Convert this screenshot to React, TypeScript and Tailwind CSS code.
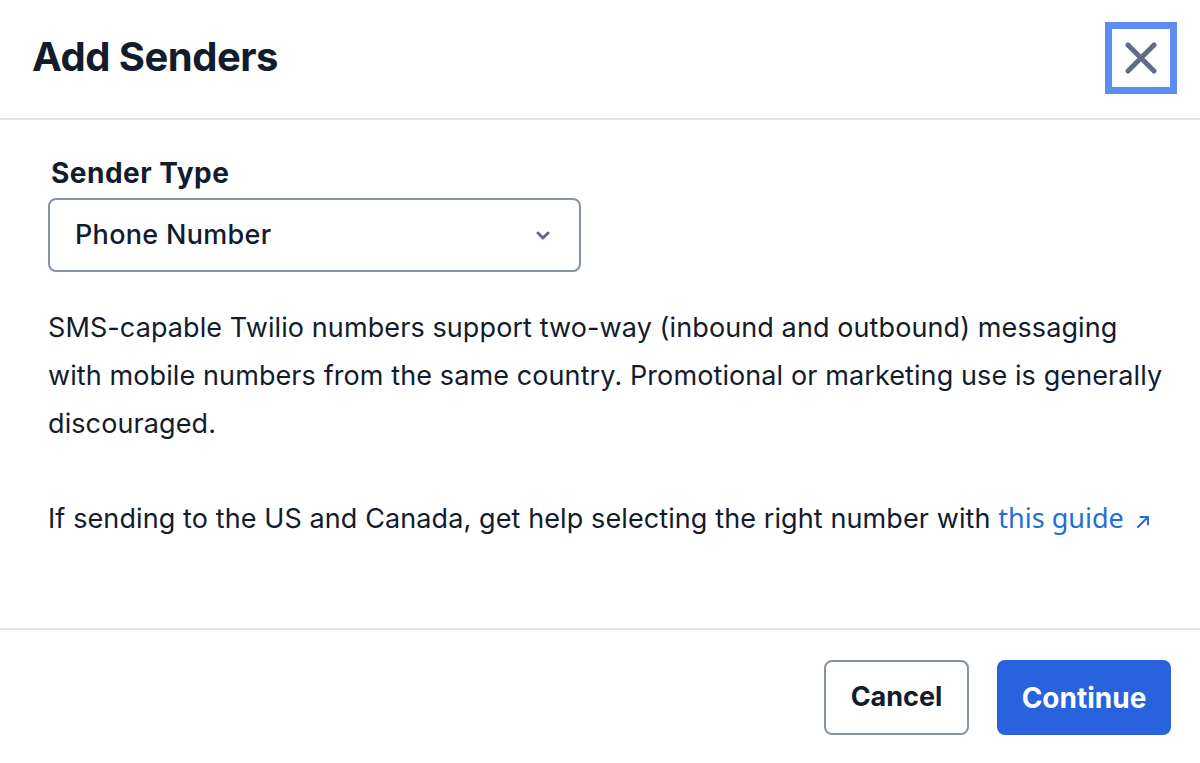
import { useState } from "react";

const inter = "font-['Inter','Liberation_Sans',sans-serif]";

// close "x" drawn with two rounded strokes
function CloseIcon() {
  return (
    <svg width="32" height="32" viewBox="0 0 32 32" fill="none">
      <path d="M3 3 L29 29 M29 3 L3 29" stroke="#606b85" strokeWidth="5" strokeLinecap="round" />
    </svg>
  );
}

function ChevronDown() {
  return (
    <svg width="14" height="9" viewBox="0 0 14 9" fill="none">
      <path d="M2 2 L7 7 L12 2" stroke="#606b85" strokeWidth="3" strokeLinecap="round" strokeLinejoin="round" />
    </svg>
  );
}

function ExternalArrow() {
  return (
    <svg width="14" height="14" viewBox="0 0 14 14" fill="none" className="inline-block ml-[12px] align-[-1px]">
      <path d="M2 12 L12 2 M4.5 2 H12 V9.5" stroke="#1f6fd9" strokeWidth="2" strokeLinecap="round" strokeLinejoin="round" />
    </svg>
  );
}

export default function App() {
  const [senderType, setSenderType] = useState("Phone Number");

  return (
    <div className={`${inter} w-[1200px] h-[763px] bg-white text-[#121c2d] flex flex-col`}>
      {/* Header */}
      <div className="h-[120px] flex items-center justify-between pl-[32px] pr-[23px] border-b-2 border-[#e1e3ea]">
        <h1 className="text-[40px] leading-[48px] font-bold tracking-[-0.5px] mt-[-4px]">Add Senders</h1>
        <button className="w-[72px] h-[72px] mt-[-2px] border-[7px] border-[#5b8ef0] flex items-center justify-center">
          <CloseIcon />
        </button>
      </div>

      {/* Body */}
      <div className="flex-1 pl-[48px] pr-[16px] pt-[35px]">
        <label className="block pl-[3px] text-[28px] leading-[36px] font-bold tracking-[0.5px]">Sender Type</label>
        <div className="mt-[7px] w-[533px] h-[74px] border-2 border-[#8891aa] rounded-[8px] flex items-center justify-between pl-[25px] pr-[29px]">
          <span className="text-[27px] font-medium tracking-[0.3px]" onClick={() => setSenderType(senderType)}>
            {senderType}
          </span>
          <ChevronDown />
        </div>
        <p className="mt-[32px] text-[27px] leading-[48px] tracking-[0.1px] max-w-[1130px]">
          SMS-capable Twilio numbers support two-way (inbound and outbound) messaging with mobile numbers from the same
          country. Promotional or marketing use is generally discouraged.
        </p>
        <p className="mt-[46px] text-[27px] leading-[48px] tracking-[0.1px]">
          If sending to the US and Canada, get help selecting the right number with{" "}
          <a className="text-[#1f6fd9] font-['Noto_Sans',sans-serif] text-[27px] tracking-normal">
            this guide
            <ExternalArrow />
          </a>
        </p>
      </div>

      {/* Footer */}
      <div className="h-[135px] border-t-2 border-[#e1e3ea] flex justify-end items-start pt-[30px] pr-[29px] gap-[28px]">
        <button className="w-[145px] h-[75px] border-2 border-[#8891aa] rounded-[8px] text-[27px] font-bold">
          Cancel
        </button>
        <button className="w-[174px] h-[75px] bg-[#2863dd] rounded-[8px] text-white text-[28px] font-bold">
          Continue
        </button>
      </div>
    </div>
  );
}
